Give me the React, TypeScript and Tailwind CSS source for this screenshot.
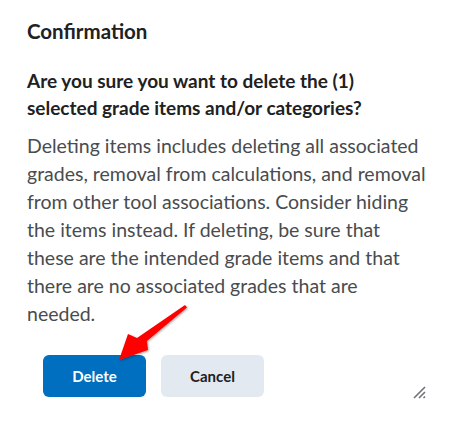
import React from 'react';

const Arrow = () => (
  <svg
    className="absolute left-[110px] top-[298px] pointer-events-none"
    width="82"
    height="68"
    viewBox="0 0 82 68"
  >
    <defs>
      <filter id="sh" x="-20%" y="-20%" width="140%" height="140%">
        <feDropShadow dx="1" dy="1" stdDeviation="1.2" floodColor="#000" floodOpacity="0.35" />
      </filter>
    </defs>
    <path
      d="M75 7 L77 9.5 L37 43 L38 52 L9 62 L18 36 L27 40 Z"
      fill="#ff0000"
      filter="url(#sh)"
    />
  </svg>
);

const App = () => {
  return (
    <div className="relative w-[453px] h-[425px] bg-white overflow-hidden font-['Lato',sans-serif]">
      <div className="pl-[27px] pr-[20px] pt-[17px]">
        <h1 className="text-[20.5px] leading-[28px] font-bold text-[#202122]">Confirmation</h1>
        <h2 className="mt-[22px] text-[19px] leading-[27px] font-bold text-[#202122] w-[370px]">
          Are you sure you want to delete the (1) selected grade items and/or categories?
        </h2>
        <p className="mt-[11px] text-[19.5px] leading-[28px] text-[#494c4e] w-[402px]">
          Deleting items includes deleting all associated grades, removal from calculations, and removal
          from other tool associations. Consider hiding the items instead. If deleting, be sure that
          these are the intended grade items and that there are no associated grades that are needed.
        </p>
        <div className="flex gap-[15px] mt-[27px] ml-[16px]">
          <button className="w-[103px] h-[42px] rounded-[6px] bg-[#006fbf] text-white text-[15px] font-bold">
            Delete
          </button>
          <button className="w-[103px] h-[42px] rounded-[6px] bg-[#e3e9f1] text-[#202122] text-[15px] font-bold">
            Cancel
          </button>
        </div>
      </div>
      <svg className="absolute left-[413px] top-[386px]" width="14" height="13" viewBox="0 0 14 13">
        <path d="M1 12 L12 1 M6 12 L12 6 M10.5 12 L12 10.5" stroke="#6e7477" strokeWidth="1.6" />
      </svg>
      <Arrow />
    </div>
  );
};

export default App;
